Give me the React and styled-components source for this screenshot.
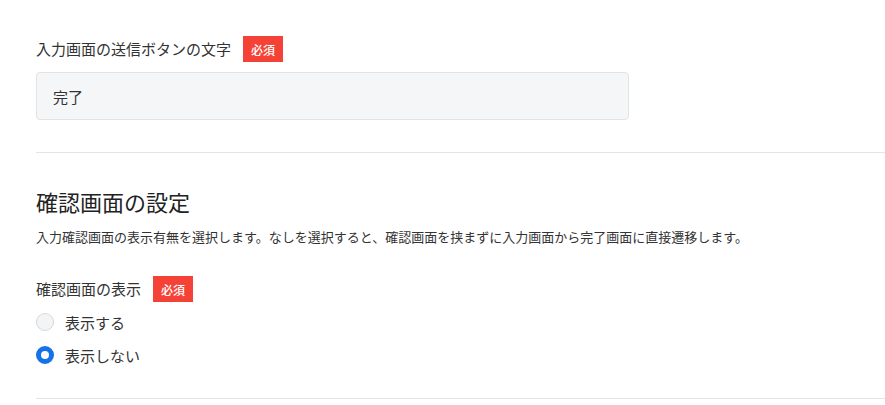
import React from "react";
import styled, { createGlobalStyle } from "styled-components";

const Global = createGlobalStyle`
  html, body { margin: 0; padding: 0; background: #fff; }
  body {
    font-family: "Noto Sans CJK JP", "Noto Sans", sans-serif;
    color: #333;
  }
`;

const Page = styled.div`
  display: flex;
  flex-direction: column;
  padding-left: 36px;
`;

const Section = styled.section`
  display: flex;
  flex-direction: column;
  padding: ${(p) => p.$pad};
`;

const Divider = styled.hr`
  margin: 0;
  border: none;
  height: 1px;
  background: #e4e4e4;
  width: 100%;
`;

const LabelRow = styled.div`
  display: flex;
  align-items: center;
  gap: 12px;
  height: 26px;
  margin-top: ${(p) => p.$mt || 0}px;
`;

const Label = styled.span`
  font-size: 15px;
  line-height: 26px;
  color: #333;
`;

const Badge = styled.span`
  display: inline-flex;
  align-items: center;
  justify-content: center;
  height: 26px;
  width: 40px;
  background: #f44336;
  color: #fff;
  font-size: 12px;
  font-weight: 500;
`;

const Input = styled.div`
  box-sizing: border-box;
  margin-top: 10px;
  width: 593px;
  height: 48px;
  display: flex;
  align-items: center;
  padding-left: 16px;
  background: #f5f6f8;
  border: 1px solid #e2e3e5;
  border-radius: 4px;
  font-size: 15px;
  color: #333;
`;

const Heading = styled.h2`
  margin: 0;
  font-size: 22px;
  line-height: 28px;
  font-weight: 400;
  color: #222;
`;

const Desc = styled.p`
  margin: 13px 0 0;
  font-size: 13px;
  line-height: 18px;
  color: #333;
`;

const RadioGroup = styled.div`
  display: flex;
  flex-direction: column;
  gap: 9px;
  margin-top: 8px;
`;

const RadioRow = styled.label`
  display: flex;
  align-items: center;
  gap: 11px;
  height: 24px;
  font-size: 15px;
  color: #333;
`;

const Circle = styled.span`
  box-sizing: border-box;
  width: 18px;
  height: 18px;
  border-radius: 50%;
  background: ${(p) => (p.$checked ? "#fff" : "#f3f4f6")};
  border: ${(p) => (p.$checked ? "5px solid #1473e6" : "1px solid #d6d8db")};
`;

export default function App() {
  return (
    <>
      <Global />
      <Page>
        <Section $pad="36px 0 32px">
          <LabelRow>
            <Label>入力画面の送信ボタンの文字</Label>
            <Badge>必須</Badge>
          </LabelRow>
          <Input>完了</Input>
        </Section>
        <Divider />
        <Section $pad="34px 0 31px">
          <Heading>確認画面の設定</Heading>
          <Desc>
            入力確認画面の表示有無を選択します。なしを選択すると、確認画面を挟まずに入力画面から完了画面に直接遷移します。
          </Desc>
          <LabelRow $mt={30}>
            <Label>確認画面の表示</Label>
            <Badge>必須</Badge>
          </LabelRow>
          <RadioGroup>
            <RadioRow>
              <Circle />
              表示する
            </RadioRow>
            <RadioRow>
              <Circle $checked />
              表示しない
            </RadioRow>
          </RadioGroup>
        </Section>
        <Divider />
      </Page>
    </>
  );
}
